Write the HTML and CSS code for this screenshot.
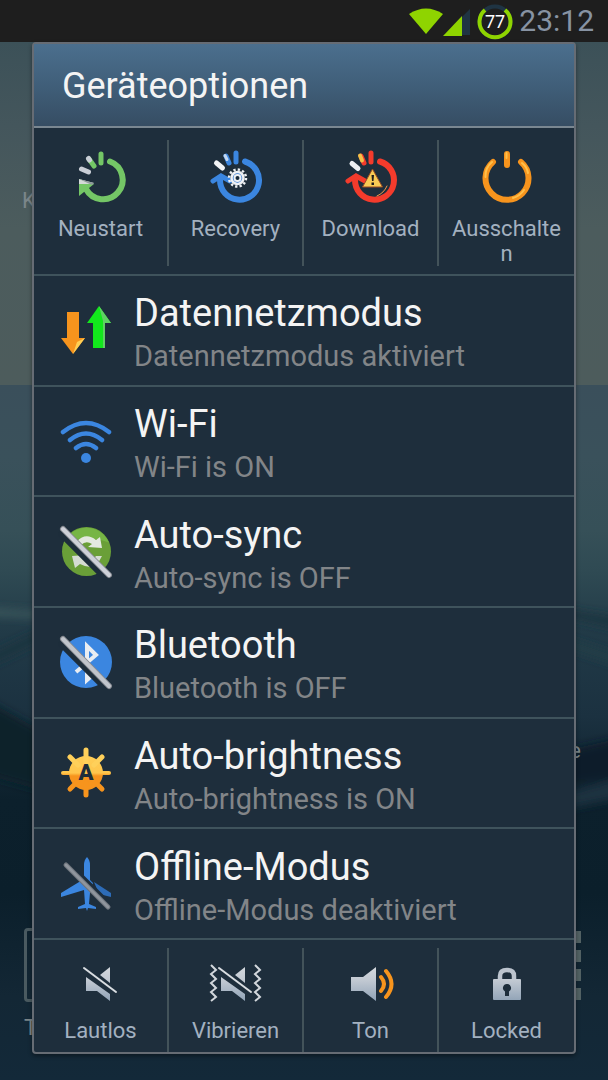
FILE: index.html
```html
<!DOCTYPE html>
<html lang="de">
<head>
  <meta charset="UTF-8" />
  <meta name="viewport" content="width=device-width, initial-scale=1.0"/>
  <title>Geräteoptionen</title>
  <link rel="stylesheet" href="styles.css">
</head>
<body>

  <!-- Home screen behind the dialog -->
  <div class="home" aria-hidden="true">
    <svg class="water" viewBox="0 0 608 1038" preserveAspectRatio="none">
      <defs>
        <filter id="soft" x="-20%" y="-20%" width="140%" height="140%"><feGaussianBlur stdDeviation="4"/></filter>
      </defs>
      <g filter="url(#soft)">
        <path d="M560 566l60 10v12l-60-14z" fill="#1c3541"/>
        <path d="M560 594l60 20v10l-60-20z" fill="#223c47"/>
        <path d="M560 710l60-14v40l-60 10z" fill="#0b1f2b"/>
        <path d="M560 752l60-16v20l-60 12z" fill="#1b3140"/>
        <path d="M-10 566l50 4v6l-50-2z" fill="#3b565c"/>
        <path d="M-10 612l50-24v12l-50 24z" fill="#1c3440"/>
        <path d="M-10 660l50 28v60l-50-14z" fill="#0c202c"/>
      </g>
    </svg>
    <span class="home-label label-top">K</span>
    <span class="home-label label-right">e</span>
    <span class="home-label label-dock">T</span>
    <span class="dock-icon"></span>
    <span class="app-dots"><i></i><i></i><i></i><i></i></span>
  </div>

  <header class="statusbar">
    <svg class="status-icons" width="104" height="40" viewBox="0 0 104 40" aria-hidden="true">
      <path d="M0 13Q17 2 34 13L17 33z" fill="#8fd400"/>
      <path d="M61 8v26H52V17z" fill="#1f3443"/>
      <path d="M53 15v20H34z" fill="#8fd400"/>
      <circle cx="86" cy="21" r="15.500" fill="none" stroke="#1f3443" stroke-width="4"/>
      <path d="M76 9A15.500 15.500 0 1 0 96 9" fill="none" stroke="#8fd400" stroke-width="4"/>
      <text x="86" y="27" text-anchor="middle" class="battery-text">77</text>
    </svg>
    <time class="clock">23:12</time>
  </header>

  <main class="dialog">
    <h1 class="dialog-title">Geräteoptionen</h1>

    <!-- Power actions -->
    <div class="tiles tiles-power">
      <button class="tile">
        <svg class="tile-icon" viewBox="0 0 56 56" aria-hidden="true">
          <g fill="none" stroke="#74c666" stroke-width="5" stroke-linecap="round">
            <path d="M37 13.500A19.500 19.500 0 1 1 13 41" stroke-width="6"/>
            <path d="M28 6v9M16 11l5 7"/>
            <path d="M8.500 21l7 3" stroke="#c9ced6"/>
            <path d="M15.500 10.500l1 1.500" stroke="#c9ced6"/>
          </g>
          <path d="M6 31v17l15-12z" fill="#74c666"/>
          <path d="M6 31v5h13l2-1z" fill="#d4d9d8"/>
          <path d="M6 31l15 4-2 2z" fill="#8f9a9c"/>
        </svg>
        <span>Neustart</span>
      </button>
      <button class="tile">
        <svg class="tile-icon" viewBox="0 0 56 56" aria-hidden="true">
          <g fill="none" stroke="#3b86e0" stroke-width="6" stroke-linecap="round">
            <path d="M37 13.500A19.500 19.500 0 1 1 12 32"/>
            <path d="M28 5v9M18 8l3 7" stroke-width="5"/>
            <path d="M5 33l8-5 9 5" stroke-width="5"/>
            <path d="M8.500 15l6 5" stroke="#f2f4f6" stroke-width="5"/>
            <path d="M17 7.500l2 4" stroke="#c4d8f0" stroke-width="3"/>
          </g>
          <circle cx="29.500" cy="30" r="8.500" fill="none" stroke="#eef1f4" stroke-width="2.500" stroke-dasharray="2.300 2.150"/>
          <circle cx="29.500" cy="30" r="6" fill="#2f76d0" stroke="#eef1f4" stroke-width="2.500"/>
          <circle cx="29.500" cy="30" r="3" fill="#14283a" stroke="#eef1f4" stroke-width="2"/>
        </svg>
        <span>Recovery</span>
      </button>
      <button class="tile">
        <svg class="tile-icon" viewBox="0 0 56 56" aria-hidden="true">
          <g fill="none" stroke="#f43b2c" stroke-width="6" stroke-linecap="round">
            <path d="M37 13.500A19.500 19.500 0 1 1 12 32"/>
            <path d="M28 5v9M18 8l3 7" stroke-width="5"/>
            <path d="M5 33l8-5 9 5" stroke-width="5"/>
            <path d="M9 15.500l6 5" stroke="#eceff2" stroke-width="5"/>
            <path d="M17 7.500l2 5" stroke="#f3c148" stroke-width="4"/>
            <path d="M34 48Q41 45 44 38" stroke="#f59a4a" stroke-width="1"/>
          </g>
          <path d="M29.500 21l10 18h-20z" fill="#f8cb55" stroke="#9a4a22" stroke-width="1"/>
          <path d="M28.500 27h2.500l-.5 6h-1.500zM28.500 34.500h2.500v2.500h-2.500z" fill="#221d1a"/>
        </svg>
        <span>Download</span>
      </button>
      <button class="tile">
        <svg class="tile-icon" viewBox="0 0 56 56" aria-hidden="true">
          <g fill="none" stroke="#f7941d" stroke-width="6" stroke-linecap="round">
            <path d="M14 14A21.500 21.500 0 1 0 42 14"/>
            <path d="M28 6v11"/>
          </g>
          <g fill="none" stroke="#ffc04a" stroke-width="2" stroke-linecap="round">
            <path d="M13 14Q6 20 6.500 29M27.500 5v5M43 15Q48 19 49 25M34 50Q41 48 45 42"/>
          </g>
        </svg>
        <span>Ausschalten</span>
      </button>
    </div>

    <!-- Toggles -->
    <div class="options">
      <button class="option">
        <svg class="option-icon" viewBox="0 0 56 56" aria-hidden="true">
          <path d="M9 10h12v26h6L15 52 3 36h6z" fill="#f7941d"/>
          <path d="M15 52l4-12 8-4z" fill="#ffcf55"/>
          <path d="M35 46V21h-6L41 4l12 17h-6v25z" fill="#12e81c"/>
          <path d="M41 4l12 17h-6v25h-2V19z" fill="#5fd163"/>
        </svg>
        <span class="option-text"><strong>Datennetzmodus</strong><small>Datennetzmodus aktiviert</small></span>
      </button>
      <button class="option">
        <svg class="option-icon" viewBox="0 0 56 56" aria-hidden="true">
          <g fill="none" stroke="#3b86e0" stroke-width="4.500" stroke-linecap="round">
            <path d="M5 19Q28 1 51 19M12 27Q28 14 44 27M18 35Q28 27 38 35"/>
          </g>
          <circle cx="28" cy="45" r="5" fill="#3b86e0"/>
        </svg>
        <span class="option-text"><strong>Wi-Fi</strong><small>Wi-Fi is ON</small></span>
      </button>
      <button class="option">
        <svg class="option-icon" viewBox="0 0 56 56" aria-hidden="true">
          <circle cx="28.500" cy="27.500" r="24.500" fill="#6a9f38"/>
          <path d="M6 18.500A24.500 24.500 0 0 1 51 18.500Q28 10 6 18.500z" fill="#76b545"/>
          <path d="M19 17Q28 8 38 16l4-3 2 11-14-1 4-3Q28 16 23 21z" fill="#e3e9e0"/>
          <path d="M14 32l14-1-4 4q8 5 14-3h6Q37 48 22 40l-5 4z" fill="#d5dcd2"/>
          <path d="M1 8l48 48" stroke="#1d2d3b" stroke-width="6"/>
          <path d="M5 5l46 46" stroke="#868a91" stroke-width="6" stroke-linecap="round"/>
          <path d="M5 5l46 46" stroke="#cdd0d8" stroke-width="4" stroke-linecap="round"/>
        </svg>
        <span class="option-text"><strong>Auto-sync</strong><small>Auto-sync is OFF</small></span>
      </button>
      <button class="option">
        <svg class="option-icon" viewBox="0 0 56 56" aria-hidden="true">
          <circle cx="28" cy="28" r="26" fill="#3b86e0"/>
          <path d="M18 38l20-17-9-9v34l9-8-20-17" fill="none" stroke="#e9edf2" stroke-width="4"/>
          <path d="M1 8l48 48" stroke="#1d2d3b" stroke-width="6"/>
          <path d="M5 5l46 47" stroke="#868a91" stroke-width="6" stroke-linecap="round"/>
          <path d="M5 5l46 47" stroke="#c0c4cb" stroke-width="4" stroke-linecap="round"/>
        </svg>
        <span class="option-text"><strong>Bluetooth</strong><small>Bluetooth is OFF</small></span>
      </button>
      <button class="option">
        <svg class="option-icon" viewBox="0 0 56 56" aria-hidden="true">
          <defs>
            <linearGradient id="sun" gradientUnits="userSpaceOnUse" x1="0" y1="4" x2="0" y2="52">
              <stop offset="0" stop-color="#ffd05a"/>
              <stop offset=".5" stop-color="#ffc64c"/>
              <stop offset=".56" stop-color="#f7941d"/>
              <stop offset="1" stop-color="#f7941d"/>
            </linearGradient>
          </defs>
          <circle cx="28" cy="28" r="17" fill="url(#sun)"/>
          <path d="M28 5v14M12 12l8 8M44 12l-8 8" stroke="#ffd05a" stroke-width="5" stroke-linecap="round"/>
          <path d="M28 50V38M12 44l8-8M44 44l-8-8" stroke="#f7941d" stroke-width="5" stroke-linecap="round"/>
          <rect x="3" y="26" width="50" height="4" rx="2" fill="url(#sun)"/>
          <text x="28" y="35" text-anchor="middle" class="auto-letter">A</text>
        </svg>
        <span class="option-text"><strong>Auto-brightness</strong><small>Auto-brightness is ON</small></span>
      </button>
      <button class="option">
        <svg class="option-icon" viewBox="0 0 56 56" aria-hidden="true">
          <path d="M29 1q3 3 3 8v15l3 3-3 10-1 11 7 3v2l-8-1-1 3-1-3-8 1v-2l7-3-1-14-23 7v-4l23-14V9q0-5 3-8z" fill="#3b86e0"/>
          <path d="M36 26l17 11v4l-12-3z" fill="#2d6cb8"/>
          <path d="M13 10l40 40" stroke="#1d2d3b" stroke-width="5"/>
          <path d="M8 9l42 42" stroke="#6d737b" stroke-width="5" stroke-linecap="round"/>
          <path d="M8 9l42 42" stroke="#8f959d" stroke-width="3" stroke-linecap="round"/>
        </svg>
        <span class="option-text"><strong>Offline-Modus</strong><small>Offline-Modus deaktiviert</small></span>
      </button>
    </div>

    <!-- Sound profile and lock -->
    <div class="tiles tiles-sound">
      <button class="tile">
        <svg class="tile-icon" viewBox="0 0 56 44" aria-hidden="true">
          <defs>
            <linearGradient id="metal" gradientUnits="userSpaceOnUse" x1="0" y1="4" x2="0" y2="38">
              <stop offset="0" stop-color="#d5d9de"/>
              <stop offset=".4" stop-color="#c3cad3"/>
              <stop offset="1" stop-color="#93a5b8"/>
            </linearGradient>
          </defs>
          <path d="M37 5v16l-10-8zM13 15l24 17v7L24 29H13z" fill="url(#metal)"/>
          <path d="M11 6l32 24" stroke="#d9dde1" stroke-width="2" stroke-linecap="round"/>
        </svg>
        <span>Lautlos</span>
      </button>
      <button class="tile">
        <svg class="tile-icon" viewBox="0 0 56 44" aria-hidden="true">
          <path d="M37 5v16l-10-8zM13 15l24 17v7L24 29H13z" fill="url(#metal)"/>
          <path d="M11 6l32 24" stroke="#d9dde1" stroke-width="2" stroke-linecap="round"/>
          <path d="M3 3l5 5-5 4 5 5-5 4 5 5-5 4 5 5-5 4M47 3l5 5-5 4 5 5-5 4 5 5-5 4 5 5-5 4" fill="none" stroke="#d2d7dc" stroke-width="2"/>
        </svg>
        <span>Vibrieren</span>
      </button>
      <button class="tile">
        <svg class="tile-icon" viewBox="0 0 56 44" aria-hidden="true">
          <path d="M8 15h12L33 5v34L20 29H8z" fill="url(#metal)"/>
          <path d="M38 15q6 7 0 14M43 9q11 13 0 26" fill="none" stroke="#f7941d" stroke-width="4" stroke-linecap="round"/>
        </svg>
        <span>Ton</span>
      </button>
      <button class="tile">
        <svg class="tile-icon" viewBox="0 0 56 44" aria-hidden="true">
          <path d="M21 20v-6q0-6 7-6t7 6v6" fill="none" stroke="#bcc4ce" stroke-width="4.500"/>
          <rect x="14" y="17" width="28" height="21" rx="1" fill="url(#metal)"/>
          <path d="M28 22a4 4 0 0 1 2 7.500V34h-4v-4.500A4 4 0 0 1 28 22z" fill="#1d2d3b"/>
        </svg>
        <span>Locked</span>
      </button>
    </div>
  </main>

</body>
</html>
```

FILE: styles.css
```css
* { box-sizing: border-box; }
body {
  margin: 0;
  min-height: 100vh;
  display: flex;
  flex-direction: column;
  background: #132735;
  font-family: Roboto, "Liberation Sans", sans-serif;
  color: #f4f4f4;
}
button {
  margin: 0;
  border: none;
  background: none;
  font: inherit;
  color: inherit;
  cursor: pointer;
}
svg { display: block; }

/* ---------- Home screen ---------- */
.home {
  position: absolute;
  inset: 42px 0 0;
  overflow: hidden;
  background: linear-gradient(#3c5158 0%, #44565c 8%, #4c5c5d 18%, #4d5c5c 33%, #3a4f5b 33%, #3a515b 40%, #365058 47%, #2f4a53 51%, #213a47 57%, #1b3140 65%, #0c202c 73%, #0b1f2b 82%, #132735 92%, #132939 100%);
}
.water {
  width: 100%;
  height: 100%;
}
.home-label {
  position: absolute;
  font-size: 22px;
  line-height: 24px;
  color: #7b868a;
}
.label-top { left: 22px; top: 147px; }
.label-right { right: 27px; top: 697px; }
.label-dock { left: 24px; top: 974px; }
.dock-icon {
  position: absolute;
  left: 24px;
  top: 886px;
  width: 60px;
  height: 74px;
  border: 3px solid #4a5a60;
  border-radius: 4px;
}
.app-dots {
  position: absolute;
  right: 27px;
  top: 889px;
  display: grid;
  gap: 7px;
}
.app-dots i {
  width: 14px;
  height: 12px;
  background: #536264;
}

/* ---------- Status bar ---------- */
.statusbar {
  position: relative;
  height: 42px;
  padding-right: 14px;
  display: flex;
  justify-content: flex-end;
  align-items: center;
  gap: 6px;
  background: #1e1e1e;
}
.battery-text {
  font-size: 18px;
  fill: #fff;
}
.clock {
  font-size: 30px;
  line-height: 40px;
  color: #8793a3;
}

/* ---------- Dialog ---------- */
.dialog {
  position: relative;
  flex: 1;
  margin: 0 32px 26px;
  display: flex;
  flex-direction: column;
  border: 2px solid #666c74;
  border-radius: 4px;
  background: #1e2e3c;
  box-shadow: 0 2px 4px rgba(0,0,0,0.4);
}
.dialog-title {
  margin: 0;
  padding: 20px 28px 18px;
  border-bottom: 2px solid #7a8791;
  background: linear-gradient(#4b6f8e, #3f5d77 55%, #364d63);
  font-size: 36px;
  line-height: 44px;
  font-weight: 400;
}
.tiles {
  display: grid;
  grid-template-columns: repeat(4, minmax(0, 1fr));
}
.tile {
  padding: 10px 10px 0;
  display: flex;
  flex-direction: column;
  align-items: center;
  justify-content: flex-start;
  gap: 12px;
  font-size: 22px;
  line-height: 25px;
  color: #a3b1c0;
  overflow-wrap: anywhere;
}
.tile:not(:last-child) { border-right: 2px solid #43535a; }
.tile-icon { width: 56px; }
.tiles-power { padding: 12px 0 8px; }
.tiles-power .tile { height: 126px; }
.tiles-power .tile { padding-top: 8px; }
.tiles-sound {
  padding-top: 8px;
  border-top: 2px solid #3f535c;
}
.tiles-sound .tile {
  height: 104px;
  padding-top: 14px;
}

/* ---------- Options ---------- */
.options {
  flex: 1;
  display: grid;
  grid-auto-rows: 1fr;
}
.option {
  padding: 0 27px 0 24px;
  display: flex;
  align-items: center;
  gap: 20px;
  border-top: 2px solid #3f535c;
  text-align: left;
}
.option-icon {
  flex: none;
  width: 56px;
}
.option-text {
  padding-top: 6px;
}
.option-text strong,
.option-text small {
  display: block;
  font-weight: 400;
}
.option-text strong {
  font-size: 38px;
  line-height: 46px;
}
.option-text small {
  font-size: 29px;
  line-height: 40px;
  color: #828588;
}
.auto-letter {
  font-size: 22px;
  font-weight: 900;
  fill: #1d2d3b;
}
```
